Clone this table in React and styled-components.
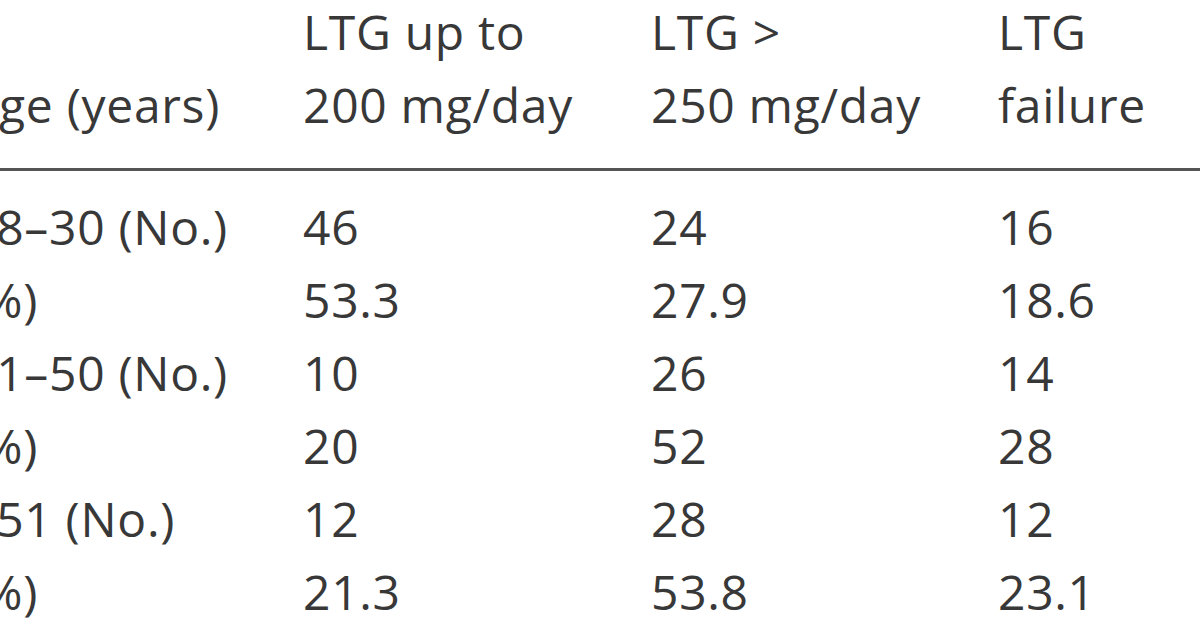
import styled, { createGlobalStyle } from "styled-components";

const GlobalStyle = createGlobalStyle`
  html, body {
    margin: 0;
    padding: 0;
    background: #ffffff;
    overflow: hidden;
  }
`;

const headers = [
  ["Age (years)"],
  ["LTG up to", "200 mg/day"],
  ["LTG >", "250 mg/day"],
  ["LTG", "failure"],
];

const rows = [
  ["18–30 (No.)", "46", "24", "16"],
  ["(%)", "53.3", "27.9", "18.6"],
  ["31–50 (No.)", "10", "26", "14"],
  ["(%)", "20", "52", "28"],
  ["≥51 (No.)", "12", "28", "12"],
  ["(%)", "21.3", "53.8", "23.1"],
];

const Page = styled.div`
  width: 1200px;
  height: 627px;
  overflow: hidden;
  background: #fff;
`;

// the picture is a crop of a wider table: slide it up/left so the
// first column gets clipped at the page edge
const Table = styled.table`
  margin: -5px 0 0 -32px;
  width: 1270px;
  border-collapse: collapse;
  table-layout: fixed;
  font-family: "Open Sans", "DejaVu Sans", sans-serif;
  font-size: 48px;
  line-height: 73px;
  letter-spacing: 0.7px;
  color: #383838;
`;

const HeadCell = styled.th`
  text-align: left;
  font-weight: 400;
  vertical-align: bottom;
  padding: 0 0 27px 0;
  border-bottom: 3px solid #555;
  width: ${(p) => p.$w}px;
  white-space: nowrap;
`;

const Cell = styled.td`
  padding: ${(p) => (p.$first ? "19px 0 0" : "0")};
  white-space: nowrap;
`;

export default function App() {
  const widths = [335, 348, 347, 240];
  return (
    <Page>
      <GlobalStyle />
      <Table>
        <thead>
          <tr>
            {headers.map((h, i) => (
              <HeadCell key={i} $w={widths[i]}>
                {h.map((line, j) => (
                  <div key={j}>{line}</div>
                ))}
              </HeadCell>
            ))}
          </tr>
        </thead>
        <tbody>
          {rows.map((r, i) => (
            <tr key={i}>
              {r.map((c, j) => (
                <Cell key={j} $first={i === 0}>
                  {c}
                </Cell>
              ))}
            </tr>
          ))}
        </tbody>
      </Table>
    </Page>
  );
}
